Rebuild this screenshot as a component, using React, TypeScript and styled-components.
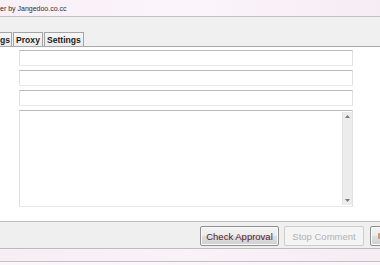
import React from "react";
import styled, { createGlobalStyle } from "styled-components";

const Global = createGlobalStyle`
  html, body { margin: 0; padding: 0; }
  body {
    width: 380px;
    height: 265px;
    overflow: hidden;
    background: #ffffff;
    font-family: "Liberation Sans", Arial, sans-serif;
  }
`;

const Window = styled.div`
  display: flex;
  flex-direction: column;
  width: 380px;
  height: 265px;
  overflow: hidden;
`;

const TitleBar = styled.div`
  height: 16px;
  flex: none;
  display: flex;
  align-items: center;
  background: linear-gradient(90deg, #f8f0f6 0%, #fbf4fa 50%, #f6edf4 100%);
  border-bottom: 1px solid #c3c1c3;
  font-size: 7px;
  color: #2e2e2e;
  white-space: nowrap;
`;

const Toolbar = styled.div`
  height: 14px;
  flex: none;
  background: #f0f0f0;
`;

const TabStrip = styled.div`
  height: 15px;
  flex: none;
  display: flex;
  align-items: flex-end;
  background: #f0f0f0;
  border-bottom: 1px solid #a9a9a9;
`;

const Tab = styled.div<{ $cut?: boolean }>`
  height: 14px;
  box-sizing: border-box;
  display: flex;
  align-items: center;
  padding: ${(p) => (p.$cut ? "0 1px 0 0" : "0 2px")};
  margin-right: 1px;
  background: linear-gradient(#f6f6f6, #ececec);
  border: 1px solid #a4a4a4;
  border-left: ${(p) => (p.$cut ? "none" : "1px solid #a4a4a4")};
  border-bottom: none;
  font-size: 8.6px;
  font-weight: bold;
  color: #1e1e1e;
  white-space: nowrap;
`;

const Content = styled.div`
  height: 174px;
  flex: none;
  box-sizing: border-box;
  background: #ffffff;
  padding: 3px 0 0 19px;
  display: flex;
  flex-direction: column;
  gap: 4px;
`;

const Field = styled.div`
  width: 334px;
  height: 16px;
  box-sizing: border-box;
  border: 1px solid #dfe2e5;
  border-top-color: #b8babd;
  border-bottom-color: #e8eaec;
  background: #ffffff;
`;

const Memo = styled.div`
  width: 334px;
  height: 97px;
  box-sizing: border-box;
  border: 1px solid #dfe2e5;
  border-top-color: #b8babd;
  border-bottom-color: #e8eaec;
  background: #ffffff;
  display: flex;
  justify-content: flex-end;
`;

const ScrollBar = styled.div`
  width: 10px;
  margin: 1px 0;
  background: #ececec;
  border-left: 1px solid #e2e2e2;
  display: flex;
  flex-direction: column;
  justify-content: space-between;
  align-items: center;
  padding: 3px 0;
  box-sizing: border-box;
`;

const Arrow = ({ down }: { down?: boolean }) => (
  <svg width="5" height="3" viewBox="0 0 5 3">
    {down ? (
      <polygon points="0,0 5,0 2.5,3" fill="#7a7a7a" />
    ) : (
      <polygon points="0,3 5,3 2.5,0" fill="#7a7a7a" />
    )}
  </svg>
);

const ButtonPanel = styled.div`
  height: 28px;
  flex: none;
  box-sizing: border-box;
  background: #efefef;
  border-top: 1px solid #bcbcbc;
  border-bottom: 1px solid #bcbcbc;
  padding: 4px 0 0 200px;
  display: flex;
  align-items: flex-start;
  gap: 5px;
  white-space: nowrap;
`;

const Button = styled.div<{ $disabled?: boolean; $w: number }>`
  width: ${(p) => p.$w}px;
  flex: none;
  height: 20px;
  box-sizing: border-box;
  display: flex;
  align-items: center;
  justify-content: center;
  border-radius: 2px;
  font-size: 9.5px;
  border: 1px solid ${(p) => (p.$disabled ? "#cdcdcd" : "#8f8f8f")};
  background: ${(p) =>
    p.$disabled
      ? "#f4f4f4"
      : "linear-gradient(#f3f3f3 0%, #ebebeb 48%, #dedede 52%, #d0d0d0 100%)"};
  box-shadow: ${(p) => (p.$disabled ? "none" : "inset 0 0 0 1px #fbfbfb")};
  color: ${(p) => (p.$disabled ? "#b2b2b2" : "#55182a")};
`;

const EdgeButton = styled(Button)`
  justify-content: flex-start;
  padding-left: 7px;
  margin-left: 1px;
`;

const Mark = styled.span`
  width: 2px;
  height: 6px;
  background: #c79a74;
  border-radius: 1px;
`;

const StatusBar = styled.div`
  height: 12px;
  flex: none;
  background: linear-gradient(90deg, #f7eef4 0%, #f9f2f7 50%, #f6edf3 100%);
  border-bottom: 1px solid #c4c2c4;
`;

const Tail = styled.div`
  flex: 1;
  background: #faf6f9;
`;

export default function App() {
  return (
    <>
      <Global />
      <Window>
        <TitleBar>er by Jangedoo.co.cc</TitleBar>
        <Toolbar />
        <TabStrip>
          <Tab $cut>gs</Tab>
          <Tab>Proxy</Tab>
          <Tab>Settings</Tab>
        </TabStrip>
        <Content>
          <Field />
          <Field />
          <Field />
          <Memo>
            <ScrollBar>
              <Arrow />
              <Arrow down />
            </ScrollBar>
          </Memo>
        </Content>
        <ButtonPanel>
          <Button $w={79}>Check Approval</Button>
          <Button $w={80} $disabled>
            Stop Comment
          </Button>
          <EdgeButton $w={80}>
            <Mark />
          </EdgeButton>
        </ButtonPanel>
        <StatusBar />
        <Tail />
      </Window>
    </>
  );
}
